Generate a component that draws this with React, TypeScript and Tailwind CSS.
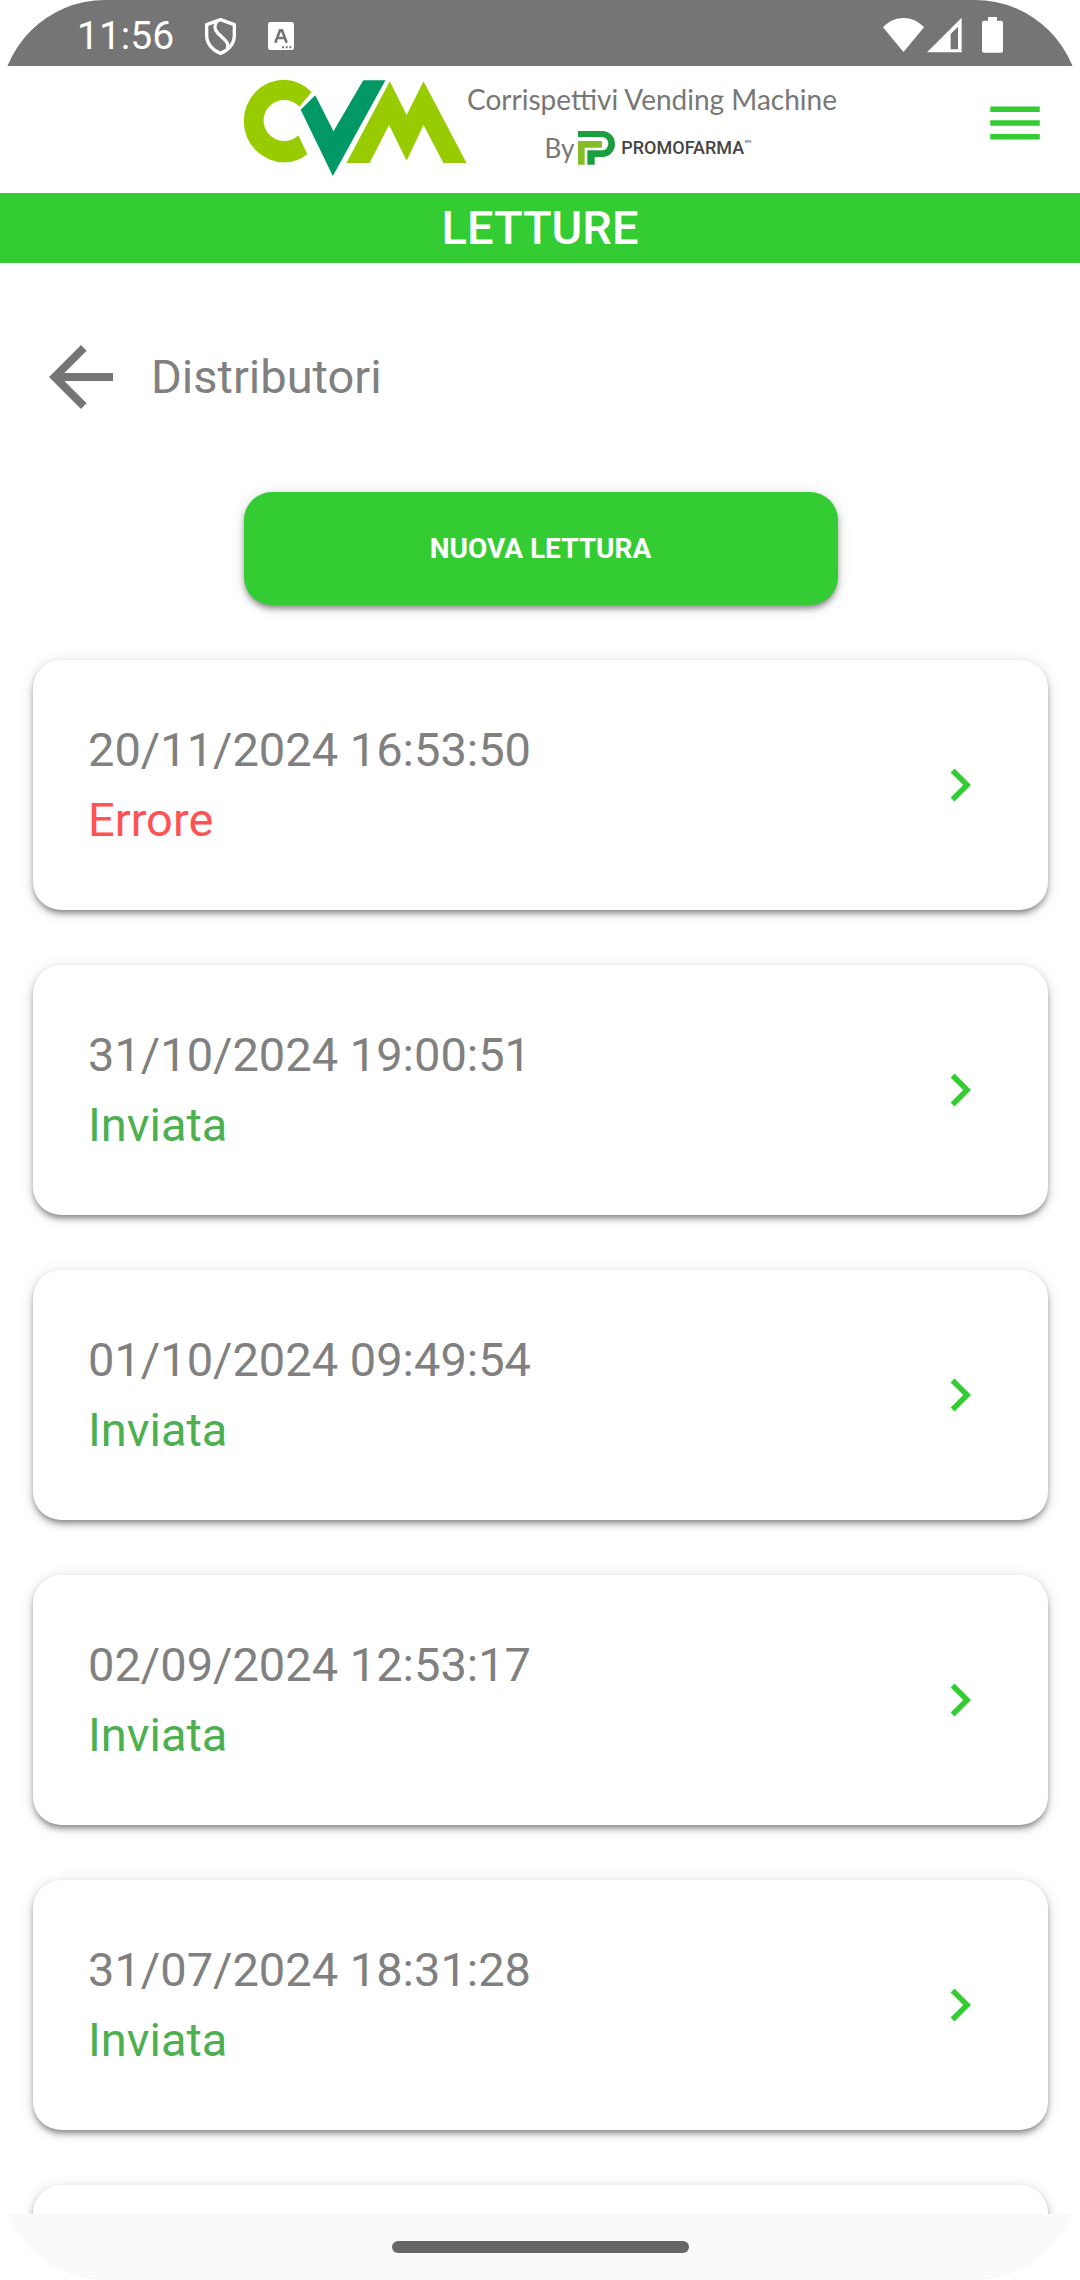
import React from 'react';

interface Reading {
  date: string;
  status: 'Errore' | 'Inviata';
}

const readings: Reading[] = [
  { date: '20/11/2024 16:53:50', status: 'Errore' },
  { date: '31/10/2024 19:00:51', status: 'Inviata' },
  { date: '01/10/2024 09:49:54', status: 'Inviata' },
  { date: '02/09/2024 12:53:17', status: 'Inviata' },
  { date: '31/07/2024 18:31:28', status: 'Inviata' },
];

const getStatusColor = (status: Reading['status']) => {
  switch (status) {
    case 'Errore':
      return 'text-[#ff5252]';
    default:
      return 'text-[#4caf50]';
  }
};

const StatusBar = () => (
  <div className="flex h-[66px] shrink-0 items-center justify-between bg-[#757575] px-[77px] text-white">
    <div className="flex items-center pt-[6px]">
      <span className="text-[39px] leading-[48px]">11:56</span>
      <svg className="ml-[31px] h-[37px] w-[31px]" viewBox="0 0 93 111" fill="none" stroke="currentColor" strokeWidth="10" strokeLinejoin="round">
        <path d="M46.5 5 88 20V52C88 77 71 97 46.5 106 22 97 5 77 5 52V20Z" />
        <path d="M37 9C27 20 28 34 38 45L60 66C70 76 71 84 66 93" />
      </svg>
      <svg className="ml-[32px] h-[28px] w-[26px]" viewBox="0 0 78 84">
        <rect width="78" height="84" rx="7" fill="currentColor" />
        <path d="M23 59 36 25H42L55 59M28 48H50" fill="none" stroke="#757575" strokeWidth="8" strokeLinecap="round" />
        <path d="M42 73h6v6h-6zM53 73h6v6h-6zM64 73h6v6h-6z" fill="#757575" />
      </svg>
    </div>
    <div className="flex items-center pt-[3px]">
      <svg className="h-[36px] w-[41px]" viewBox="0 0 123 108" fill="currentColor">
        <path d="M61.5 105 0 31C36-6 87-6 123 31Z" />
      </svg>
      <svg className="ml-[3px] h-[36px] w-[35px]" viewBox="0 0 105 108" fill="currentColor" fillRule="evenodd">
        <path d="M0 106 104 2V106ZM71 97H93V29L71 51Z" />
      </svg>
      <svg className="ml-5 h-[36px] w-[21px]" viewBox="0 0 63 108" fill="currentColor">
        <path d="M18 0H45V11H57Q63 11 63 17V101Q63 107 57 107H6Q0 107 0 101V17Q0 11 6 11H18Z" />
      </svg>
    </div>
  </div>
);

const Logo = () => (
  <div className="flex items-start pt-[13px]">
    <svg className="h-[98px] w-[224px]" viewBox="38 43 676 296" role="img" aria-label="CVM">
      <path fill="#99cc00" d="M245 82A124 125 0 0 0 163 45A123 125 0 0 0 163 295Q200 295 232 270L205 213A62 62 0 1 1 208 127Z" />
      <path fill="#009966" d="M212 136 256 92 311 201 401 47H468L309 336Z" />
      <path fill="#99cc00" d="M350 297 481 50 532 152 583 50 713 297H643L583 182 532 290 479 182 420 297Z" />
    </svg>
    <div className="flex flex-col items-center font-['Lato',sans-serif]">
      <span className="text-[28px] leading-10 text-[#777777]">Corrispettivi Vending Machine</span>
      <div className="mt-3 flex items-center pr-2">
        <span className="text-[26px] leading-[34px] text-[#777777]">By</span>
        <svg className="ml-1 h-[34px] w-[37px]" viewBox="140 199 111 102">
          <path fill="#1a9e3e" d="M140 199H213A38 39 0 0 1 213 277H190V300H168V257H212A19 20 0 0 0 212 217H140Z" />
          <path fill="#86bc25" d="M140 229H212V249H160V300H140Z" />
        </svg>
        <span className="ml-[6px] font-['Roboto',sans-serif] text-[18px] font-medium leading-[34px] text-[#444444]">PROMOFARMA</span>
        <span className="self-start text-[10px] leading-[24px] text-[#555555]">℠</span>
      </div>
    </div>
  </div>
);

const Header = () => (
  <header className="grid h-[127px] shrink-0 grid-cols-[1fr_auto_1fr] items-start">
    <div />
    <Logo />
    <button type="button" aria-label="Menu" className="mr-8 mt-6 justify-self-end text-[#33cc33]">
      <svg className="h-[66px] w-[66px]" viewBox="0 0 24 24" fill="currentColor">
        <path d="M3 18h18v-2H3v2zm0-5h18v-2H3v2zm0-7v2h18V6H3z" />
      </svg>
    </button>
  </header>
);

const ReadingCard = ({ reading }: { reading: Reading }) => (
  <a
    href="#"
    className="flex items-center justify-between rounded-[28px] bg-white p-[55px] text-[47px] leading-[70px] shadow-[0_4px_6px_-1px_rgba(0,0,0,0.45),0_2px_16px_rgba(0,0,0,0.12)]"
  >
    <div>
      <p className="text-[#808080]">{reading.date}</p>
      <p className={getStatusColor(reading.status)}>{reading.status}</p>
    </div>
    <svg className="h-[66px] w-[66px] text-[#33cc33]" viewBox="0 0 24 24" fill="currentColor">
      <path d="M10 6L8.59 7.41 13.17 12l-4.58 4.59L10 18l6-6z" />
    </svg>
  </a>
);

const App: React.FC = () => {
  return (
    <div className="flex h-screen flex-col overflow-hidden rounded-[105px] bg-white font-['Roboto',sans-serif]">
      <StatusBar />
      <Header />
      <h1 className="shrink-0 bg-[#33cc33] text-center text-[47px] font-medium leading-[70px] text-white">LETTURE</h1>

      <main className="min-h-0 flex-1 overflow-hidden pl-[33px] pr-8 pt-[66px]">
        <div className="flex items-center">
          <button type="button" aria-label="Indietro" className="text-[#757575]">
            <svg className="h-24 w-24" viewBox="0 0 24 24" fill="currentColor">
              <path d="M20 11H7.83l5.59-5.59L12 4l-8 8 8 8 1.41-1.41L7.83 13H20v-2z" />
            </svg>
          </button>
          <h2 className="ml-[22px] text-[47px] leading-[70px] text-[#808080]">Distributori</h2>
        </div>

        <button
          type="button"
          className="mx-auto mt-[67px] block h-[113px] w-[594px] rounded-[28px] bg-[#33cc33] text-[28px] font-bold text-white shadow-[0_4px_6px_-1px_rgba(0,0,0,0.45),0_2px_16px_rgba(0,0,0,0.12)]"
        >
          NUOVA LETTURA
        </button>

        <div className="mt-[55px] flex flex-col gap-[55px]">
          {readings.map((reading) => (
            <ReadingCard key={reading.date} reading={reading} />
          ))}
          {/* Next card, still below the fold */}
          <div className="h-[250px] rounded-[28px] bg-white shadow-[0_4px_6px_-1px_rgba(0,0,0,0.45),0_2px_16px_rgba(0,0,0,0.12)]" />
        </div>
      </main>

      <div className="flex h-[66px] shrink-0 items-center justify-center bg-[#fafafa]">
        <div className="h-3 w-[297px] rounded-full bg-[#666666]" />
      </div>
    </div>
  );
};

export default App;
